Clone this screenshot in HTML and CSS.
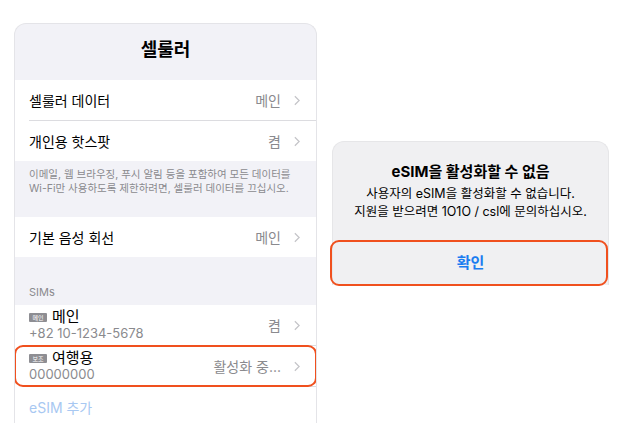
FILE: index.html
```html
<!DOCTYPE html>
<html lang="ko">
<head>
  <meta charset="UTF-8" />
  <meta name="viewport" content="width=device-width, initial-scale=1.0"/>
  <title>셀룰러 - eSIM</title>
  <link rel="stylesheet" href="styles.css">
</head>
<body>
  <div class="stage">

    <!-- 설정 화면 -->
    <section class="settings">
      <header class="nav-title">셀룰러</header>

      <div class="group">
        <div class="row">
          <span class="label">셀룰러 데이터</span>
          <span class="value">메인</span>
          <svg class="chevron" viewBox="0 0 7 12"><polyline points="1,1 6,6 1,11"/></svg>
        </div>
        <div class="row">
          <span class="label">개인용 핫스팟</span>
          <span class="value">켬</span>
          <svg class="chevron" viewBox="0 0 7 12"><polyline points="1,1 6,6 1,11"/></svg>
        </div>
      </div>
      <p class="group-footer">이메일, 웹 브라우징, 푸시 알림 등을 포함하여 모든 데이터를<br>Wi-Fi만 사용하도록 제한하려면, 셀룰러 데이터를 끄십시오.</p>

      <div class="group">
        <div class="row">
          <span class="label">기본 음성 회선</span>
          <span class="value">메인</span>
          <svg class="chevron" viewBox="0 0 7 12"><polyline points="1,1 6,6 1,11"/></svg>
        </div>
      </div>

      <div class="group-header">SIMs</div>
      <div class="group">
        <div class="row sim">
          <div class="sim-info">
            <div class="sim-name"><span class="badge">메인</span>메인</div>
            <div class="sim-number">+82 10-1234-5678</div>
          </div>
          <span class="value">켬</span>
          <svg class="chevron" viewBox="0 0 7 12"><polyline points="1,1 6,6 1,11"/></svg>
        </div>
        <div class="row sim marked">
          <div class="sim-info">
            <div class="sim-name"><span class="badge">보조</span>여행용</div>
            <div class="sim-number">00000000</div>
          </div>
          <span class="value">활성화 중...</span>
          <svg class="chevron" viewBox="0 0 7 12"><polyline points="1,1 6,6 1,11"/></svg>
        </div>
        <div class="row action">eSIM 추가</div>
      </div>
    </section>

    <!-- 알림 -->
    <div class="alert">
      <div class="alert-body">
        <h2 class="alert-title">eSIM을 활성화할 수 없음</h2>
        <p class="alert-text">사용자의 eSIM을 활성화할 수 없습니다.<br>지원을 받으려면 1O1O / csl에 문의하십시오.</p>
      </div>
      <div class="alert-button marked">확인</div>
    </div>

  </div>
</body>
</html>
```

FILE: styles.css
```css
body {
  margin: 0;
  background: #fff;
  font-family: Inter, "Noto Sans CJK KR", sans-serif;
  color: #000;
}
.stage {
  display: flex;
  align-items: flex-start;
  gap: 15px;
  padding: 23px 0 0 14px;
  height: 408px;
  overflow: hidden;
}

/* 설정 화면 */
.settings {
  width: 301px;
  height: 399px;
  background: #f2f2f7;
  border: 1px solid #e4e4e8;
  border-bottom: none;
  border-radius: 12px 12px 0 0;
  overflow: hidden;
}
.nav-title {
  padding: 14px 0 18px;
  line-height: 24px;
  text-align: center;
  font-size: 18px;
  font-weight: 700;
}
.group {
  background: #fff;
}
.row {
  display: flex;
  align-items: center;
  height: 40px;
  padding: 0 16px 0 14px;
  font-size: 14px;
}
.row + .row {
  border-top: 1px solid transparent;
  background: linear-gradient(#dcdce0, #dcdce0) 14px 0 / 100% 1px no-repeat, #fff;
  background-origin: border-box;
}
.label {
  flex: 1;
}
.value {
  color: #8a8a8e;
}
.chevron {
  width: 6px;
  height: 11px;
  margin-left: 13px;
  fill: none;
  stroke: #c4c4c8;
  stroke-width: 1.4;
}
.group-footer {
  margin: 0;
  padding: 7px 14px 21px;
  font-size: 10.5px;
  line-height: 14px;
  white-space: nowrap;
  color: #8a8a8e;
}
.group-header {
  padding: 28px 14px 6px;
  font-size: 11px;
  line-height: 14px;
  color: #8a8a8e;
}
.sim {
  position: relative;
}
.sim-info {
  flex: 1;
}
.sim-name {
  display: flex;
  align-items: center;
  font-size: 15px;
  line-height: 16px;
}
.badge {
  width: 18px;
  height: 9px;
  margin-right: 5px;
  border-radius: 1px;
  background: #8e8e93;
  color: #fff;
  font-size: 6px;
  line-height: 9px;
  text-align: center;
}
.sim-number {
  font-size: 13px;
  line-height: 16px;
  color: #8a8a8e;
}
.action {
  color: #a8c8f2;
}

/* 알림 */
.alert {
  position: relative;
  width: 275px;
  margin-top: 118px;
  background: #f0f0f2;
  border: 1px solid #e6e6e8;
  border-bottom: none;
  border-radius: 12px 12px 0 0;
}
.alert-body {
  padding: 20px 12px 20px;
  text-align: center;
}
.alert-title {
  margin: 0 0 3px;
  font-size: 15px;
  line-height: 20px;
  font-weight: 700;
}
.alert-text {
  margin: 0;
  font-size: 12.5px;
  line-height: 18px;
}
.alert-button {
  position: relative;
  height: 44px;
  line-height: 44px;
  text-align: center;
  font-size: 15px;
  font-weight: 600;
  color: #1a7cf0;
}

/* 주황색 강조 테두리 */
.marked::after {
  content: "";
  position: absolute;
  top: -1px;
  bottom: -1px;
  left: 0;
  right: 0;
  border: 2px solid #f0501e;
  border-radius: 9px;
}
.row.marked::after {
  left: -1px;
  right: -1px;
}
.alert-button.marked::after {
  left: -3px;
  right: 0;
}
```
